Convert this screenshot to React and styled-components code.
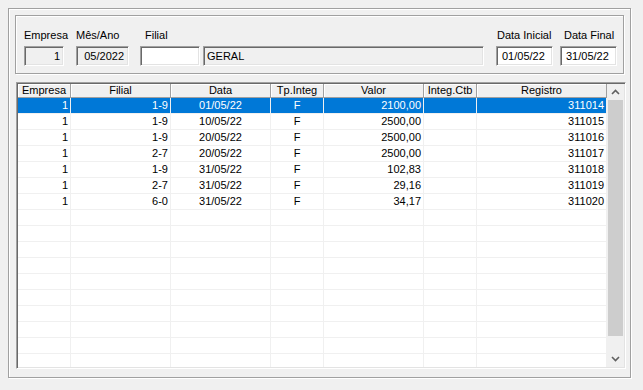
import React from "react";
import styled, { createGlobalStyle } from "styled-components";

const Global = createGlobalStyle`
  html, body { margin: 0; padding: 0; background: #f0f0f0; }
  body { font-family: "Liberation Sans", Arial, sans-serif; font-size: 11px; color: #000; }
  * { box-sizing: border-box; }
`;

const Window = styled.div`
  width: 643px;
  height: 390px;
  background: #f0f0f0;
  padding: 8px 0 0 8px;
`;

const Frame = styled.div`
  width: 623px;
  height: 370px;
  border: 1px solid #a0a0a0;
  box-shadow: inset 1px 1px 0 #fff, 1px 1px 0 #fff;
  padding: 6px 0 0 6px;
`;

const GroupBox = styled.div`
  width: 609px;
  height: 59px;
  border: 1px solid #a0a0a0;
  box-shadow: inset 1px 1px 0 #fff, 1px 1px 0 #fff;
  padding: 13px 0 7px 8px;
  display: flex;
  align-items: flex-end;
`;

const FieldGroup = styled.div`
  display: flex;
  flex-direction: column;
  margin-left: ${(p) => p.$ml || 0}px;
  width: ${(p) => p.$w}px;
`;

const Label = styled.div`
  height: 13px;
  line-height: 13px;
  margin-bottom: 4px;
  padding-left: ${(p) => p.$pl || 0}px;
  white-space: nowrap;
`;

const Field = styled.div`
  height: 20px;
  line-height: 17px;
  border-style: solid;
  border-width: 1px;
  border-color: #a0a0a0 #fff #fff #a0a0a0;
  box-shadow: inset 1px 1px 0 #696969, inset -1px -1px 0 #e3e3e3;
  background: ${(p) => (p.$readonly ? "#f0f0f0" : "#fff")};
  text-align: ${(p) => p.$align || "left"};
  padding: 1px ${(p) => p.$pr ?? 3}px 0 ${(p) => p.$pl ?? 3}px;
  white-space: nowrap;
  overflow: hidden;
`;

const Grid = styled.div`
  margin: 8px 0 0 1px;
  width: 610px;
  height: 287px;
  border-style: solid;
  border-width: 1px;
  border-color: #a0a0a0 #fff #fff #a0a0a0;
  box-shadow: inset 1px 1px 0 #696969, inset -1px -1px 0 #e3e3e3;
  padding: 1px;
  display: flex;
  overflow: hidden;
`;

const Table = styled.div`
  flex: 1;
  display: flex;
  flex-direction: column;
  overflow: hidden;
  background: #fff;
`;

const HeaderRow = styled.div`
  display: flex;
  height: 14px;
  flex-shrink: 0;
`;

const HeaderCell = styled.div`
  width: ${(p) => p.$w}px;
  flex-shrink: 0;
  height: 14px;
  line-height: 13px;
  text-align: center;
  background: #f0f0f0;
  border-right: 1px solid #a0a0a0;
  border-bottom: 1px solid #a0a0a0;
  box-shadow: inset 1px 1px 0 #fff;
  white-space: nowrap;
  overflow: hidden;
`;

const Row = styled.div`
  display: flex;
  height: 16px;
  flex-shrink: 0;
  background: ${(p) => (p.$selected ? "#0078d7" : "#fff")};
  color: ${(p) => (p.$selected ? "#fff" : "#000")};
`;

const Cell = styled.div`
  width: ${(p) => p.$w}px;
  flex-shrink: 0;
  height: 16px;
  line-height: 15px;
  border-right: 1px solid #f0f0f0;
  border-bottom: 1px solid #f0f0f0;
  text-align: ${(p) => p.$align || "left"};
  padding: 0 2px 0 2px;
  white-space: nowrap;
  overflow: hidden;
`;

const Scrollbar = styled.div`
  width: 17px;
  flex-shrink: 0;
  background: #f0f0f0;
  display: flex;
  flex-direction: column;
`;

const ScrollButton = styled.div`
  height: 16px;
  flex-shrink: 0;
  display: flex;
  align-items: center;
  justify-content: center;
`;

const Track = styled.div`
  flex: 1;
  padding: 0 1px;
`;

const Thumb = styled.div`
  height: 236px;
  background: #cdcdcd;
`;

const columns = [
  { key: "emp", title: "Empresa", w: 53, align: "right" },
  { key: "fil", title: "Filial", w: 100, align: "right" },
  { key: "data", title: "Data", w: 100, align: "center" },
  { key: "tp", title: "Tp.Integ", w: 53, align: "center" },
  { key: "valor", title: "Valor", w: 100, align: "right" },
  { key: "ctb", title: "Integ.Ctb", w: 53, align: "center" },
  { key: "reg", title: "Registro", w: 130, align: "right" },
];

const rows = [
  { emp: "1", fil: "1-9", data: "01/05/22", tp: "F", valor: "2100,00", ctb: "", reg: "311014" },
  { emp: "1", fil: "1-9", data: "10/05/22", tp: "F", valor: "2500,00", ctb: "", reg: "311015" },
  { emp: "1", fil: "1-9", data: "20/05/22", tp: "F", valor: "2500,00", ctb: "", reg: "311016" },
  { emp: "1", fil: "2-7", data: "20/05/22", tp: "F", valor: "2500,00", ctb: "", reg: "311017" },
  { emp: "1", fil: "1-9", data: "31/05/22", tp: "F", valor: "102,83", ctb: "", reg: "311018" },
  { emp: "1", fil: "2-7", data: "31/05/22", tp: "F", valor: "29,16", ctb: "", reg: "311019" },
  { emp: "1", fil: "6-0", data: "31/05/22", tp: "F", valor: "34,17", ctb: "", reg: "311020" },
];

const allRows = [...rows, ...Array.from({ length: 11 }, () => ({}))];

const Chevron = ({ up }) => (
  <svg width="9" height="6" viewBox="0 0 9 6">
    <path
      d={up ? "M1 5 L4.5 1.5 L8 5" : "M1 1 L4.5 4.5 L8 1"}
      fill="none"
      stroke="#606060"
      strokeWidth="1.6"
    />
  </svg>
);

export default function App() {
  return (
    <>
      <Global />
      <Window>
        <Frame>
          <GroupBox>
            <FieldGroup $w={40}>
              <Label>Empresa</Label>
              <Field $readonly $align="right" $pr={3}>1</Field>
            </FieldGroup>
            <FieldGroup $w={53} $ml={12}>
              <Label>Mês/Ano</Label>
              <Field $readonly $align="right" $pr={4}>05/2022</Field>
            </FieldGroup>
            <FieldGroup $w={60} $ml={11}>
              <Label $pl={5}>Filial</Label>
              <Field />
            </FieldGroup>
            <FieldGroup $w={281} $ml={3}>
              <Field $readonly $pl={3}>GERAL</Field>
            </FieldGroup>
            <FieldGroup $w={57} $ml={12}>
              <Label $pl={1}>Data Inicial</Label>
              <Field $pl={5}>01/05/22</Field>
            </FieldGroup>
            <FieldGroup $w={57} $ml={7}>
              <Label $pl={4}>Data Final</Label>
              <Field $pl={5}>31/05/22</Field>
            </FieldGroup>
          </GroupBox>
          <Grid>
            <Table>
              <HeaderRow>
                {columns.map((c) => (
                  <HeaderCell key={c.key} $w={c.w}>{c.title}</HeaderCell>
                ))}
              </HeaderRow>
              {allRows.map((r, i) => (
                <Row key={i} $selected={i === 0}>
                  {columns.map((c) => (
                    <Cell key={c.key} $w={c.w} $align={c.align}>{r[c.key] || ""}</Cell>
                  ))}
                </Row>
              ))}
            </Table>
            <Scrollbar>
              <ScrollButton><Chevron up /></ScrollButton>
              <Track><Thumb /></Track>
              <ScrollButton><Chevron /></ScrollButton>
            </Scrollbar>
          </Grid>
        </Frame>
      </Window>
    </>
  );
}
